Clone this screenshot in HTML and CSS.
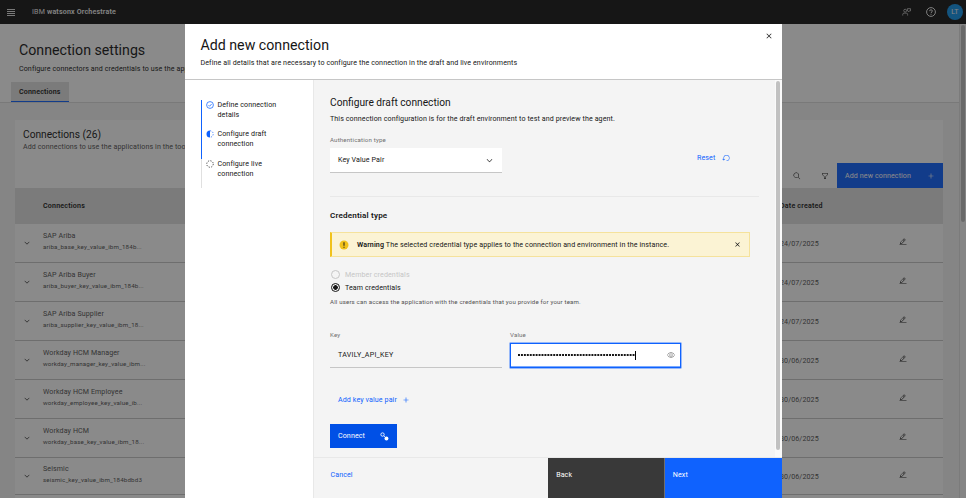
FILE: index.html
```html
<!DOCTYPE html>
<html lang="en">
<head>
<meta charset="utf-8">
<title>Connection settings</title>
<link rel="stylesheet" href="styles.css">
</head>
<body>
<svg class="defs" aria-hidden="true">
  <symbol id="chevron" viewBox="0 0 16 16"><path d="M8 11 3 6l.7-.7L8 9.600l4.300-4.300.7.7z"/></symbol>
  <symbol id="edit" viewBox="0 0 32 32"><path d="M2 26h28v2H2zM25.400 9c.8-.8.8-2 0-2.800l-3.600-3.600c-.8-.8-2-.8-2.800 0l-15 15V24h6.400zM20.400 4 24 7.600l-3 3L17.400 7zM6 22v-3.600l10-10 3.600 3.600-10 10z"/></symbol>
  <symbol id="add" viewBox="0 0 32 32"><path d="M17 15V8h-2v7H8v2h7v7h2v-7h7v-2z"/></symbol>
  <symbol id="close" viewBox="0 0 32 32"><path d="M24 9.400 22.600 8 16 14.600 9.400 8 8 9.400l6.600 6.600L8 22.600 9.400 24l6.600-6.600 6.600 6.600 1.400-1.400-6.600-6.600z"/></symbol>
</svg>

<header class="topbar">
  <svg class="menu" viewBox="0 0 8 7"><path d="M0 .5h8M0 2.500h8M0 4.500h8M0 6.500h8"/></svg>
  <div class="brand">IBM <b>watsonx Orchestrate</b></div>
  <svg class="feedback" viewBox="0 0 20 18"><circle cx="7" cy="6" r="3.200"/><path d="M1.500 17v-2.500a3 3 0 0 1 3-3h5a3 3 0 0 1 3 3V17M12 1.500h7v5h-2.500l-1.500 2-1.500-2H12z"/></svg>
  <svg class="help" viewBox="0 0 20 20"><circle cx="10" cy="10" r="8.800"/><path d="M7.300 8.300V8a2.300 2.300 0 0 1 2.300-2.300h.8A2.300 2.300 0 0 1 12.700 8c0 1.900-2.700 1.900-2.700 4.300M10 13.800v1.700"/></svg>
  <div class="avatar">LT</div>
</header>

<div class="page">
  <main class="main">
    <section class="intro">
      <h1>Connection settings</h1>
      <p>Configure connectors and credentials to use the applications</p>
      <div class="tabs"><div class="tab">Connections</div></div>
    </section>
    <section class="tile">
      <div class="tile-head">
        <h2>Connections (26)</h2>
        <p>Add connections to use the applications in the tools</p>
      </div>
      <div class="toolbar">
        <svg class="tool" viewBox="0 0 32 32"><path d="m29 27.600-7.600-7.600a11 11 0 1 0-1.400 1.400l7.600 7.600zM4 13a9 9 0 1 1 9 9 9 9 0 0 1-9-9z"/></svg>
        <svg class="tool" viewBox="0 0 32 32"><path d="M18 28h-4a2 2 0 0 1-2-2v-7.600L4.600 11A2 2 0 0 1 4 9.600V6a2 2 0 0 1 2-2h20a2 2 0 0 1 2 2v3.600a2 2 0 0 1-.6 1.400L20 18.400V26a2 2 0 0 1-2 2zM6 6v3.600l8 8V26h4v-8.400l8-8V6z"/></svg>
        <div class="add-new"><span>Add new connection</span><svg><use href="#add"/></svg></div>
      </div>
      <div class="row row-head"><span></span><b>Connections</b><b>Date created</b><span></span></div>
      <div class="row"><svg class="chev"><use href="#chevron"/></svg><div class="name">SAP Ariba<small>ariba_base_key_value_ibm_184b...</small></div><div>24/07/2025</div><svg class="pen"><use href="#edit"/></svg></div>
      <div class="row"><svg class="chev"><use href="#chevron"/></svg><div class="name">SAP Ariba Buyer<small>ariba_buyer_key_value_ibm_184b...</small></div><div>24/07/2025</div><svg class="pen"><use href="#edit"/></svg></div>
      <div class="row"><svg class="chev"><use href="#chevron"/></svg><div class="name">SAP Ariba Supplier<small>ariba_supplier_key_value_ibm_18...</small></div><div>24/07/2025</div><svg class="pen"><use href="#edit"/></svg></div>
      <div class="row"><svg class="chev"><use href="#chevron"/></svg><div class="name">Workday HCM Manager<small>workday_manager_key_value_ibm...</small></div><div>30/06/2025</div><svg class="pen"><use href="#edit"/></svg></div>
      <div class="row"><svg class="chev"><use href="#chevron"/></svg><div class="name">Workday HCM Employee<small>workday_employee_key_value_ib...</small></div><div>30/06/2025</div><svg class="pen"><use href="#edit"/></svg></div>
      <div class="row"><svg class="chev"><use href="#chevron"/></svg><div class="name">Workday HCM<small>workday_base_key_value_ibm_18...</small></div><div>30/06/2025</div><svg class="pen"><use href="#edit"/></svg></div>
      <div class="row row-last"><svg class="chev"><use href="#chevron"/></svg><div class="name">Seismic<small>seismic_key_value_ibm_184bdbd3</small></div><div>30/06/2025</div><svg class="pen"><use href="#edit"/></svg></div>
    </section>
  </main>
  <div class="page-scroll"><i></i></div>
</div>

<div class="overlay"></div>

<div class="modal">
  <div class="modal-head">
    <div>
      <h1>Add new connection</h1>
      <p>Define all details that are necessary to configure the connection in the draft and live environments</p>
    </div>
    <svg class="modal-close"><use href="#close"/></svg>
  </div>
  <div class="modal-body">
    <nav class="steps">
      <div class="step done"><svg viewBox="0 0 16 16"><circle class="ring" cx="8" cy="8" r="6.800"/><path class="ring" d="m5 8.300 2.200 2.200L11.200 6"/></svg><span>Define connection details</span></div>
      <div class="step done"><svg viewBox="0 0 16 16"><path d="M8 1a7 7 0 0 0 0 14z"/><path class="ring dash" d="M8 1.600a6.400 6.400 0 0 1 0 12.800"/></svg><span>Configure draft connection</span></div>
      <div class="step"><svg viewBox="0 0 16 16"><circle class="ring dash" cx="8" cy="8" r="6.500"/></svg><span>Configure live connection</span></div>
    </nav>
    <div class="panel">
      <div class="form-wrap">
        <div class="form">
          <h2>Configure draft connection</h2>
          <p class="lead">This connection configuration is for the draft environment to test and preview the agent.</p>
          <label class="label">Authentication type</label>
          <div class="auth">
            <div class="select"><span>Key Value Pair</span><svg><use href="#chevron"/></svg></div>
            <div class="reset"><span>Reset</span><svg viewBox="0 0 32 32"><path d="M18 28A12 12 0 1 0 6 16v6.200l-3.600-3.600L1 20l6 6 6-6-1.400-1.400L8 22.200V16a10 10 0 1 1 10 10z"/></svg></div>
          </div>
          <h3>Credential type</h3>
          <div class="warning">
            <svg class="warn" viewBox="0 0 20 20"><circle cx="10" cy="10" r="9"/><path d="M10 4.500v7M10 13.500v2"/></svg>
            <span><b>Warning</b> The selected credential type applies to the connection and environment in the instance.</span>
            <svg class="warn-close"><use href="#close"/></svg>
          </div>
          <div class="radio disabled"><i></i>Member credentials</div>
          <div class="radio checked"><i></i>Team credentials</div>
          <p class="hint">All users can access the application with the credentials that you provide for your team.</p>
          <div class="fields">
            <div><label class="label">Key</label><div class="input">TAVILY_API_KEY</div></div>
            <div><label class="label">Value</label>
              <div class="input focus"><span class="dots"></span><span class="caret"></span>
                <svg viewBox="0 0 32 32"><path d="M30.900 15.700A16.700 16.700 0 0 0 16 5 16.700 16.700 0 0 0 1.100 15.700a1 1 0 0 0 0 .6A16.700 16.700 0 0 0 16 27a16.700 16.700 0 0 0 14.900-10.700 1 1 0 0 0 0-.6zM16 25c-5.300 0-10.900-3.900-12.900-9C5.100 10.900 10.700 7 16 7s10.900 3.900 12.900 9c-2 5.100-7.600 9-12.900 9zm0-15a6 6 0 1 0 6 6 6 6 0 0 0-6-6zm0 10a4 4 0 1 1 4-4 4 4 0 0 1-4 4z"/></svg>
              </div>
            </div>
          </div>
          <div class="add-pair"><span>Add key value pair</span><svg><use href="#add"/></svg></div>
          <div class="connect"><span>Connect</span><svg viewBox="0 0 16 16"><circle class="hollow" cx="4.500" cy="4.500" r="3"/><path class="hollow" d="m6.800 6.800 2 2"/><circle cx="11.500" cy="11.500" r="3.500"/></svg></div>
        </div>
        <div class="scroll"><i></i></div>
      </div>
      <footer class="actions">
        <div class="cancel">Cancel</div>
        <div class="back">Back</div>
        <div class="next">Next</div>
      </footer>
    </div>
  </div>
</div>
</body>
</html>
```
FILE: styles.css
```css
* { box-sizing: border-box; margin: 0; padding: 0; }
html, body { width: 966px; height: 498px; overflow: hidden; }
body {
  position: relative;
  display: flex;
  flex-direction: column;
  font: 7.1px/10px Roboto, "Liberation Sans", sans-serif;
  letter-spacing: .1px;
  color: #161616;
  background: #f4f4f4;
}
.defs { position: absolute; width: 0; height: 0; }
svg { flex: none; fill: currentColor; }
b { font-weight: 600; }
h1 { font-size: 14.2px; line-height: 18px; font-weight: 400; letter-spacing: 0; }
h2 { font-size: 10.2px; line-height: 14px; font-weight: 400; letter-spacing: 0; }

/* Top bar */
.topbar { display: flex; align-items: center; flex: none; height: 24px; padding: 0 3px 0 7px; background: #161616; color: #f4f4f4; }
.menu { width: 8px; height: 7px; margin-right: 17px; stroke: #f4f4f4; stroke-width: .9; }
.brand { flex: 1; letter-spacing: .17px; }
.feedback, .help { fill: none; stroke: #e0e0e0; stroke-width: 1.6; }
.feedback { width: 9px; height: 8px; margin-right: 15px; }
.help { width: 10px; height: 10px; margin-right: 11px; stroke: #fff; stroke-width: 1.8; }
.avatar { width: 16px; height: 16px; border-radius: 50%; background: #1192e8; text-align: center; line-height: 16px; }

/* Page */
.page { display: flex; flex: 1; min-height: 0; }
.main { display: flex; flex: 1; flex-direction: column; border-right: 1px solid #e0e0e0; }
.page-scroll { width: 6px; padding: 1px 1px 0; }
.page-scroll i { display: block; width: 4px; height: 197px; border-radius: 2px; background: #bdbdbd; }
.intro { flex: none; height: 79px; padding: 17px 11px 0; background: #fff; border-bottom: 1px solid #dcdcdc; }
.intro h1, .intro p { padding-left: 8px; white-space: nowrap; }
.intro p { margin-top: 5px; }
.tabs { display: flex; margin-top: 8px; }
.tab { width: 58px; height: 20px; padding-left: 8px; background: #e0e0e0; border-bottom: 1px solid #0f62fe; font-weight: 600; line-height: 20px; letter-spacing: .15px; }
.tile { flex: 1; margin: 17px 16px 0 15px; background: #fff; }
.tile-head { height: 43px; padding: 8px 8px 0; }
.tile-head p { color: #525252; }
.toolbar { display: flex; align-items: center; justify-content: flex-end; height: 25px; }
.tool { width: 8px; height: 8px; margin-right: 20px; }
.tool + .tool { margin-right: 8px; }
.add-new { display: flex; align-items: center; justify-content: space-between; width: 106px; height: 25px; padding: 0 7px 0 8px; background: #0f62fe; color: #fff; }
.add-new svg { width: 10px; height: 10px; }
.row { display: grid; grid-template-columns: 28px 737px 104px 1fr; align-items: center; height: 39px; border-bottom: 1px solid #c6c6c6; color: #525252; }
.row > div:nth-child(3) { padding-top: 1px; }
.row-head { height: 36px; border: 0; background: #e0e0e0; color: #161616; letter-spacing: .19px; }
.row-last { height: 37px; }
.chev { width: 8px; height: 8px; margin-left: 8px; color: #161616; }
.name { padding-bottom: 4px; }
.name small { display: block; margin-top: 1px; font-size: 6.2px; letter-spacing: .15px; }
.pen { width: 8px; height: 8px; margin: 0 0 3px 15px; color: #161616; }

.overlay { position: absolute; inset: 0; background: rgba(22, 22, 22, .5); }

/* Modal */
.modal { position: absolute; top: 24px; left: 184.5px; display: flex; flex-direction: column; width: 597px; height: 474px; background: #fff; }
.modal-head { display: flex; justify-content: space-between; height: 56px; padding: 12px 7.5px 0 16px; border-bottom: 1px solid #c6c6c6; }
.modal-head p { margin-top: 4px; letter-spacing: .1px; }
.modal-close { width: 10px; height: 10px; margin-top: -5px; }
.modal-body { display: flex; flex: 1; min-height: 0; }
.steps { width: 129px; padding: 20px 16px; border-right: 1px solid #e8e8e8; }
.step { display: flex; gap: 4px; height: 29.3px; padding-left: 4px; border-left: 1px solid #e0e0e0; }
.step.done { border-color: #0f62fe; }
.step svg { width: 8px; height: 8px; margin-top: 1px; }
.step.done svg { color: #0f62fe; }
.step span { width: 64px; padding-top: .2px; }
.ring { fill: none; stroke: currentColor; stroke-width: 1.5; }
.dash { stroke-dasharray: 2.5 2.6; }
.panel { display: flex; flex: 1; flex-direction: column; background: #f4f4f4; }
.form-wrap { display: flex; flex: 1; min-height: 0; }
.form { flex: 1; padding: 16px 0 0 16.5px; }
.scroll { width: 6.5px; padding: 1px 1px 0; background: #fafafa; }
.scroll i { display: block; width: 4px; height: 369px; border-radius: 2px; background: #c1c1c1; }
.lead { margin-top: 3.5px; }
.label { display: block; font-size: 6.1px; line-height: 8px; letter-spacing: .18px; color: #6f6f6f; }
.lead + .label { margin-top: 12.5px; }
.auth { display: flex; gap: 195px; width: 429px; height: 49px; margin-top: 4px; border-bottom: 1px solid #e8e8e8; }
.select { display: flex; align-items: center; justify-content: space-between; width: 172px; height: 25px; padding: 0 8px; background: #fff; border-bottom: 1px solid #c6c6c6; }
.select svg { width: 9px; height: 9px; }
.reset { display: flex; align-items: center; gap: 7px; height: 19px; color: #0f62fe; }
.reset svg { width: 8px; height: 8px; }
h3 { margin-top: 12px; font-size: 8.1px; line-height: 12px; font-weight: 600; letter-spacing: .17px; }
.warning { display: flex; align-items: center; width: 420px; height: 25px; margin-top: 11px; padding: 0 7px; border: 1px solid #f5e29c; border-left: 2px solid #f1c21b; background: #fbf3d4; }
.warning span { flex: 1; letter-spacing: .11px; }
.warn { width: 10px; height: 10px; margin-right: 8px; fill: #f1c21b; }
.warn path { stroke: #161616; stroke-width: 2; }
.warn-close { width: 9px; height: 9px; }
.radio { display: flex; align-items: center; gap: 5px; height: 13px; margin-left: 1px; }
.radio i { width: 9px; height: 9px; border: 1px solid #161616; border-radius: 50%; }
.warning + .radio { margin-top: 11px; }
.disabled { color: #c6c6c6; }
.disabled i { border-color: #c6c6c6; }
.checked i { background: radial-gradient(circle, #161616 2px, transparent 2.6px); }
.hint { margin-top: 3px; font-size: 6.1px; line-height: 10px; letter-spacing: .17px; color: #525252; }
.fields { display: flex; gap: 8px; margin-top: 24px; }
.input { display: flex; align-items: center; width: 172px; height: 25px; margin-top: 4px; padding: 0 8px; border-bottom: 1px solid #c6c6c6; letter-spacing: .24px; }
.focus { width: 171px; padding: 0 5px 1px 7px; border: 1px solid #0f62fe; background: #fff; box-shadow: inset 0 -1px #78a9ff, 0 0 0 .4px #0f62fe; }
.dots { width: 117px; height: 2px; background: radial-gradient(circle at 1px 1px, #161616 .9px, transparent 1.2px) 0 0 / 2.95px 2px; }
.caret { width: 1px; height: 9px; background: #000; }
.focus svg { width: 8px; height: 8px; margin-left: auto; color: #525252; }
.add-pair { display: flex; align-items: center; gap: 4px; height: 12px; margin: 26px 0 0 8px; color: #0f62fe; }
.add-pair svg { width: 10px; height: 10px; }
.connect { display: flex; align-items: center; justify-content: space-between; width: 67px; height: 24px; margin-top: 18px; padding: 0 8px; background: #0050e6; color: #fff; }
.connect svg { width: 9px; height: 9px; }
.hollow { fill: none; stroke: #fff; stroke-width: 1.5; }
.actions { display: flex; flex: none; height: 41px; border-top: 1px solid #e8e8e8; line-height: 33px; }
.cancel { flex: 1; padding-left: 17px; color: #0f62fe; }
.back, .next { width: 116.7px; padding-left: 8px; color: #fff; }
.back { background: #393939; border-right: 1px solid #6f6f6f; }
.next { background: #0f62fe; }
```
